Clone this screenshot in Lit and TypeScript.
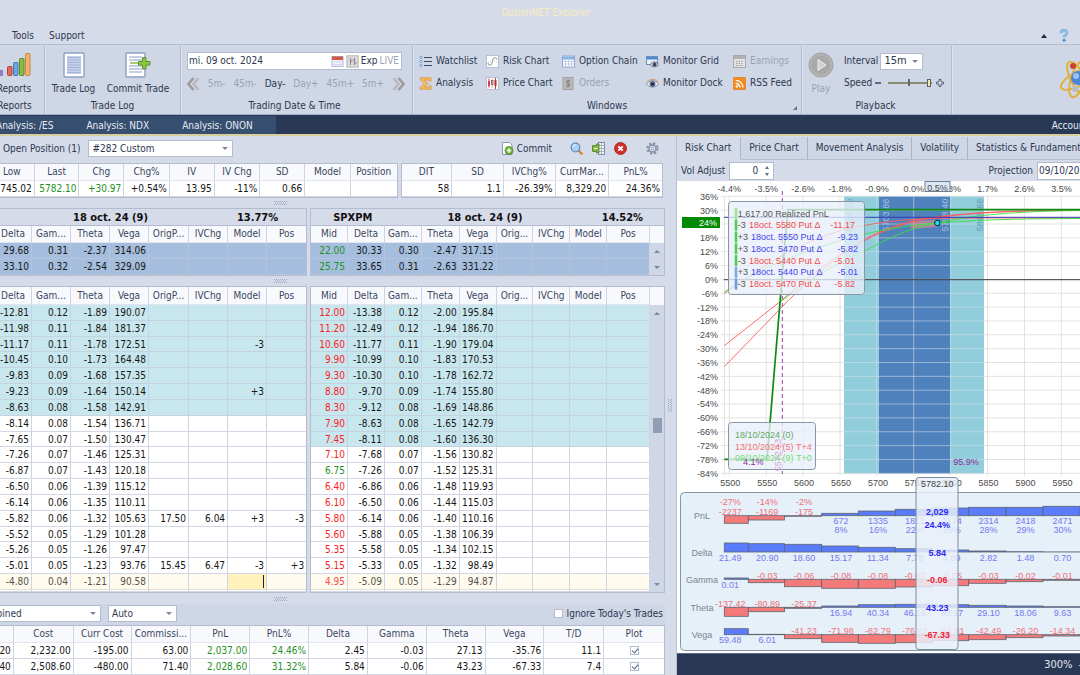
import { LitElement, html, svg, css } from "lit";
import { customElement } from "lit/decorators.js";
import { classMap } from "lit/directives/class-map.js";

const base = css`
  * { box-sizing: border-box; }
  :host { display: block; min-width: 0; font: 10px/14px "DejaVu Sans Condensed", "Noto Sans", sans-serif; color: #2c3850; }
  button, input, select { font: inherit; color: inherit; margin: 0; border-radius: 0; }
  button { background: none; border: 0; padding: 0; white-space: nowrap; }
  input, select { appearance: none; border: 1px solid #b2bccf; background: #fff; outline: none; min-width: 0; }
  svg { display: block; flex: none; }
  .combo { position: relative; display: block; }
  .combo select { display: block; width: 100%; height: 17px; padding: 0 14px 0 3px; }
  .combo::after { content: ""; position: absolute; right: 5px; top: 7px; border: 3px solid transparent; border-top-color: #7c88a3; border-bottom: 0; }
`;

const combo = (label: string, value: string) => html`
  <span class="combo"><select aria-label=${label}><option>${value}</option></select></span>`;

/* ---------- icons ---------- */
const icons: Record<string, unknown> = {
  watch: svg`<g stroke="#3f4a60"><path d="M5 2.5h8M5 6.5h8M5 10.5h8"/></g><g fill="#dcecff" stroke="#5f8fcb" stroke-width=".8"><circle cx="2" cy="2.5" r="1.2"/><circle cx="2" cy="6.5" r="1.2"/><circle cx="2" cy="10.5" r="1.2"/></g>`,
  sigma: svg`<path d="M1 .8h11v3.400h-1.500L9.500 3H5.500L9 6.500 5.500 10h4.300l1-1.300h1.200v3.500H1v-1.500L5.300 6.500 1 2.300z" fill="#f6bd62" stroke="#d08f2e" stroke-width=".7"/>`,
  risk: svg`<rect x=".5" y=".5" width="12" height="12" fill="#fff" stroke="#b6c0d4"/><path d="M2 8c0 3 3.500 3 4 0l.8-3C7.300 2 10.500 2 11 4.500" fill="none" stroke="#6d9460" /><path d="M2 7h9" stroke="#c9d0dc" stroke-dasharray="1 1"/>`,
  price: svg`<rect x=".5" y=".5" width="12" height="12" fill="#fff" stroke="#b6c0d4"/><path d="M3 1.500v9M9.500 1v11" stroke="#c33"/><rect x="2" y="4" width="2" height="5" fill="#e04040"/><rect x="8.500" y="3" width="2" height="6" fill="#c62828"/><rect x="5.500" y="3.500" width="1.500" height="4" fill="#fff" stroke="#555" stroke-width=".8"/><path d="M6.200 2v9" stroke="#888" stroke-width=".6"/>`,
  chain: svg`<rect x=".5" y="1" width="12" height="11" fill="#fff" stroke="#8fa9d0"/><rect x="1" y="1.500" width="11" height="3" fill="#7db0e4"/><path d="M1 6.500h11M1 9h11M3.500 2v9.500M6.500 2v9.500M9.500 2v9.500" stroke="#b3c6e2" stroke-width=".8"/>`,
  orders: svg`<rect x="1" y=".5" width="10" height="12" fill="#b9b9b9" stroke="#a2a2a2"/><path d="M8.200 4.200C7.500 3.300 4.300 3.400 4.300 5c0 1.700 3.700 1.100 3.700 2.900 0 1.700-3.300 1.700-4 .5M6.100 2.500v8" fill="none" stroke="#7e7e7e"/>`,
  mgrid: svg`<rect x=".5" y="1.500" width="11" height="8" fill="#e9f1fb" stroke="#6f8fbf"/><rect x="1" y="2" width="10" height="2.500" fill="#4f8bd0"/><path d="M4 9.500c2.500-3.500 6.500-3.500 9 0-2.500 3-6.500 3-9 0z" fill="#dfe6f2" stroke="#4d566b" stroke-width=".8"/><circle cx="8.600" cy="9.500" r="2" fill="#39455f"/>`,
  mdock: svg`<path d="M.5 7c3-4.500 9-4.500 12 0-3 4-9 4-12 0z" fill="#f4f4f4" stroke="#7d8598" stroke-width=".9"/><path d="M1 5c3-3.500 8-3.500 11 0" fill="none" stroke="#d39a55"/><circle cx="6.500" cy="7" r="3" fill="#5a7195"/><circle cx="6.500" cy="7" r="1.500" fill="#20242e"/>`,
  earn: svg`<rect x=".5" y=".5" width="12" height="12" fill="#e3e3e3" stroke="#a9a9a9"/><rect x="1" y="1" width="11" height="3" fill="#b0b0b0"/><path d="M3 6.500h7M3 8.500h7M3 10.500h7" stroke="#a2a2a2" stroke-dasharray="1.500 1"/>`,
  rss: svg`<rect x=".3" y=".3" width="12.400" height="12.400" rx="1.500" fill="#f28a1c" stroke="#d9730d" stroke-width=".6"/><circle cx="3.800" cy="9.400" r="1.200" fill="#fff"/><path d="M2.700 6.300a4.200 4.200 0 0 1 4.200 4.200M2.700 3.300a7.200 7.200 0 0 1 7.200 7.200" fill="none" stroke="#fff" stroke-width="1.300"/>`,
  calendar: svg`<rect x="1" y="1.500" width="11" height="10" fill="#eef2fa" stroke="#9aa9c7" stroke-width=".8"/><rect x="1" y="1.500" width="11" height="3.500" fill="#d5584c"/><path d="M3 7h8M3 9.500h8" stroke="#b7c4dc" stroke-dasharray="1.500 1"/>`,
  candles: svg`<rect x=".8" y=".8" width="11.400" height="11.400" fill="#d9d9d9" stroke="#adadad" stroke-width=".8"/><path d="M4.500 3v7M4.500 6h2M8.500 3v7M8.500 8h2M6.700 5h1.800" stroke="#777" stroke-width=".8"/>`,
  commit: svg`<path d="M1.500.5h7l2.500 2.500v9.500h-9.500z" fill="#fff" stroke="#8b97b3"/><circle cx="8" cy="8.500" r="4" fill="#6fb23a" stroke="#4d8a25" stroke-width=".8"/><path d="M8 6.300v4.400M5.800 8.500h4.400" stroke="#fff" stroke-width="1.400"/>`,
  lens: svg`<path d="M8.500 8.500l4 4" stroke="#c98b3c" stroke-width="2.400"/><circle cx="5.500" cy="5.500" r="4.300" fill="#a9cff5" stroke="#5f8cc6" stroke-width="1.300"/><path d="M3 5a2.500 2.500 0 0 1 2.500-2.300" stroke="#fff" fill="none"/>`,
  columns: svg`<rect x="6.500" y=".5" width="6" height="12" fill="#f4f7fc" stroke="#7f8ca8"/><path d="M7 3.500h5M7 6.500h5M7 9.500h5M9.500 1v11" stroke="#a5b0c6"/><path d="M.5 3.500h4V2h2.500v9H4.500V9.500h-4z" fill="#7db63f" stroke="#527f24" stroke-width=".8"/><path d="M2 6.500h3.500" stroke="#fff"/>`,
  stop: svg`<circle cx="6.500" cy="6.500" r="6" fill="#cf2f27" stroke="#a51f19" stroke-width=".8"/><path d="M4.300 4.300l4.400 4.400M8.700 4.300L4.300 8.700" stroke="#fff" stroke-width="1.900"/>`,
  gear: svg`<circle cx="6.500" cy="6.500" r="5.200" fill="none" stroke="#8792aa" stroke-width="2" stroke-dasharray="2.300 1.780"/><circle cx="6.500" cy="6.500" r="3.600" fill="#dfe5f0" stroke="#8792aa" stroke-width="1.600"/><circle cx="6.500" cy="6.500" r="1.300" fill="#f7f9fd" stroke="#77839c" stroke-width=".8"/>`,
};
const icon = (name: string) => html`<svg width="13" height="13" viewBox="0 0 13 13" aria-hidden="true">${icons[name]}</svg>`;

const chevrons = (flip: boolean) => html`
  <svg width="14" height="14" viewBox="0 0 14 14" aria-hidden="true">
    <g fill="none" stroke="#9b9b9b" stroke-width="2.600" transform=${flip ? "matrix(-1 0 0 1 14 0)" : ""}>
      <path d="M7.500 1L2.500 7l5 6"/><path d="M12.500 1L7.500 7l5 6" stroke="#b9b9bd"/>
    </g>
  </svg>`;

/* ---------- ribbon ---------- */
@customElement("app-ribbon")
class AppRibbon extends LitElement {
  static styles = [base, css`
    .title { height: 25px; line-height: 25px; padding-left: 11px; text-align: center; color: #f6ecbd; }
    .menu { display: flex; align-items: center; height: 20px; padding: 2px 11px 0 12px; gap: 15px; border-bottom: 1px solid #b3bed2; }
    .spacer { flex: 1; }
    .up { border: 3px solid transparent; border-bottom: 4px solid #1e2a44; border-top: 0; }
    .menu svg { margin: -1px 0 0 -3px; }
    .bar { display: flex; height: 70px; padding-top: 1px; background: #cfd6e5; border-bottom: 1px solid #a3afc4; }
    .group { display: flex; flex-direction: column; flex: none; position: relative; padding: 6px 6px 0; border-right: 1px solid #b3bed2; box-shadow: 1px 0 #dfe4ef; }
    .group h2 { font: inherit; text-align: center; margin: auto 0 1px; }
    .body { display: flex; height: 46px; }
    .reports { width: 60px; margin-left: -15px; }
    .reports .big { width: 46px; }
    .log { width: 136px; padding: 6px 5px 0; }
    .date { width: 232px; padding: 6px 10px 0 6px; }
    .windows { width: 389px; }
    .play { width: 150px; padding-left: 4px; }
    .big { display: flex; flex-direction: column; align-items: center; justify-content: space-between; height: 44px; }
    .log .big { width: 49px; }
    .log .big + .big { width: 77px; margin-left: 4px; }
    .date .body { flex-direction: column; }
    .field { display: flex; align-items: center; height: 18px; gap: 2px; background: #fff; border: 1px solid #b2bccf; padding-right: 2px; }
    .field input { flex: 1; width: 0; border: 0; padding: 0 1px; background: none; }
    .muted, button:disabled { color: #9aa3b5; }
    .steps { display: flex; align-items: center; justify-content: space-between; margin: 6px -4px 0 -1px; height: 15px; }
    .links { display: grid; grid-template-columns: 67px 76px 84px 87px 66px; grid-template-rows: 18px 18px; row-gap: 4px; }
    .links button { display: flex; align-items: center; gap: 4px; }
    .corner { position: absolute; right: 4px; bottom: 4px; border: 2px solid #5d6f92; border-top-color: transparent; border-left-color: transparent; }
    .play .big { width: 31px; color: #9aa3b5; }
    .controls { margin-left: 8px; }
    .line { display: flex; align-items: center; height: 18px; margin-bottom: 4px; }
    .line .combo { width: 43px; margin-left: 2px; }
    .line .combo select { font-size: 11px; }
    .line button { width: 9px; line-height: 10px; text-align: center; }
    .line i { display: block; width: 6px; height: 2px; background: #5f6c86; }
    .speed { width: 44px; height: 10px; margin: 0 4px; border: 0; background: linear-gradient(#667, #667) 20px 1px / 2px 7px no-repeat, linear-gradient(#8b8b70, #8b8b70) 0 4px / 100% 2px no-repeat; }
    .speed::-webkit-slider-thumb { appearance: none; width: 4px; height: 8px; background: #f6e9a8; border: 1px solid #55607a; }
    .logo { margin: 12px -18px 0 auto; }
    .docs { display: flex; height: 20px; margin-top: 1px; background: #293955; border-bottom: 2px solid #d8cf9c; color: #e6ebf4; box-shadow: 0 -1px #293955; }
    .docs nav { display: flex; background: #364e6f; padding-right: 23px; margin-left: -4px; }
    .docs a { color: inherit; text-decoration: none; line-height: 20px; }
    .docs a + a { margin-left: 33px; }
    .docs .account { margin: 0 -8px 0 auto; line-height: 20px; }
    .clip { overflow: hidden; }
  `];
  render() {
    const link = (i: string, t: string, off = false) => html`<button ?disabled=${off}>${icon(i)}${t}</button>`;
    return html`
      <div class="title">OptionNET Explorer</div>
      <div class="menu">
        <button>Tools</button><button>Support</button><span class="spacer"></span><span class="up"></span>
        <svg width="10" height="13" viewBox="0 0 10 13"><path d="M2 4.200C2 .500 8 .500 8 4c0 2-2.900 2-2.900 4.500" fill="none" stroke="#5a9bd0" stroke-width="2.600"/><path d="M2 4.200C2 .500 8 .500 8 4c0 2-2.900 2-2.900 4.500" fill="none" stroke="#a9d4f2" stroke-width="1.200"/><circle cx="5.100" cy="11.300" r="1.500" fill="#4a8fc9"/></svg>
      </div>
      <div class="bar clip">
        <section class="group reports">
          <div class="body"><button class="big">
            <svg width="34" height="26" viewBox="0 0 34 26"><rect x="2" y="18" width="4" height="6" fill="#8a7fc0"/><rect x="10.500" y="14.500" width="4.500" height="9" rx="1" fill="#df6a5d" stroke="#b04238"/><rect x="16.500" y="10.500" width="4.500" height="13" rx="1" fill="#6fa6de" stroke="#3f77b5"/><rect x="22.500" y="6.500" width="4.500" height="17" rx="1" fill="#87bb45" stroke="#5c8b26"/><rect x="28.500" y="1.500" width="4.500" height="22" rx="1" fill="#f1b271" stroke="#c98440"/></svg>
            Reports</button></div>
          <h2>Reports</h2>
        </section>
        <section class="group log">
          <div class="body">
            <button class="big"><svg width="22" height="26" viewBox="0 0 22 26"><rect x="1" y="1" width="20" height="24" rx="1" fill="#fff" stroke="#8fa0c4" stroke-width="1.400"/><rect x="4" y="4" width="14" height="18" fill="#c5d2ea"/><path d="M4 5.500h14M4 8h14M4 10.500h14M4 13h14M4 15.500h14M4 18h14M4 20.500h14" stroke="#9fb0d4" stroke-width=".9"/></svg>Trade Log</button>
            <button class="big"><svg width="26" height="26" viewBox="0 0 26 26"><rect x="1" y="1" width="19" height="24" rx="1" fill="#fff" stroke="#8fa0c4" stroke-width="1.400"/><path d="M4 5h13M4 8h13M4 14h13M4 17h13M4 20h13" stroke="#b3c0dc" stroke-width="1.400"/><path d="M5 11h10" stroke="#86b23c" stroke-width="1.400"/><path d="M17.500 5.500h3.500v4h4v3.500h-4v4h-3.500v-4h-4v-3.500h4z" fill="#8ec63f" stroke="#5f922a"/></svg>Commit Trade</button>
          </div>
          <h2>Trade Log</h2>
        </section>
        <section class="group date">
          <div class="body">
            <div class="field"><input aria-label="Trading date" value="mi. 09 oct. 2024">${icon("calendar")}${icon("candles")}<button>Exp</button><button class="muted">LIVE</button></div>
            <div class="steps">
              <button aria-label="Back">${chevrons(false)}</button>
              <button disabled>5m-</button><button disabled>45m-</button><button>Day-</button><button disabled>Day+</button><button disabled>45m+</button><button disabled>5m+</button>
              <button aria-label="Forward">${chevrons(true)}</button>
            </div>
          </div>
          <h2>Trading Date &amp; Time</h2>
        </section>
        <section class="group windows">
          <div class="body links">
            ${link("watch", "Watchlist")}${link("risk", "Risk Chart")}${link("chain", "Option Chain")}${link("mgrid", "Monitor Grid")}${link("earn", "Earnings", true)}
            ${link("sigma", "Analysis")}${link("price", "Price Chart")}${link("orders", "Orders", true)}${link("mdock", "Monitor Dock")}${link("rss", "RSS Feed")}
          </div>
          <h2>Windows</h2><span class="corner"></span>
        </section>
        <section class="group play">
          <div class="body">
            <button class="big"><svg width="26" height="26" viewBox="0 0 26 26"><circle cx="13" cy="13" r="12" fill="#b4b4b4" stroke="#a0a0a0"/><circle cx="13" cy="13" r="9.500" fill="#a8a8a8"/><path d="M10 7.500l8 5.500-8 5.500z" fill="#d2d2d2" stroke="#eee"/></svg>Play</button>
            <div class="controls">
              <div class="line">Interval ${combo("Interval", "15m")}</div>
              <div class="line"><label for="speed">Speed</label>&nbsp;<button aria-label="Slower"><i></i></button><input id="speed" class="speed" type="range" value="97"><button aria-label="Faster"><svg width="8" height="8" viewBox="0 0 8 8"><path d="M3 .500h2V3h2.500v2H5v2.500H3V5H.500V3H3z" fill="#dde3ee" stroke="#55607a"/></svg></button></div>
            </div>
          </div>
          <h2>Playback</h2>
        </section>
        <svg class="logo" width="40" height="42" viewBox="0 0 40 42">
          <g fill="none" stroke="#e0b23c" stroke-width="2"><ellipse cx="20" cy="21" rx="19" ry="7" transform="rotate(-28 20 21)"/><ellipse cx="20" cy="21" rx="19" ry="7" transform="rotate(62 20 21)"/><ellipse cx="20" cy="21" rx="19" ry="7" transform="rotate(108 20 21)"/></g>
          <circle cx="20" cy="20" r="7" fill="#4d86d6"/><circle cx="18" cy="18" r="3" fill="#9cc3f2"/><circle cx="15" cy="8" r="3" fill="#c8432c"/><circle cx="17" cy="31" r="3" fill="#b9bcc4"/>
        </svg>
      </div>
      <div class="docs clip">
        <nav><a href="#es">Analysis: /ES</a><a href="#ndx">Analysis: NDX</a><a href="#onon">Analysis: ONON</a></nav>
        <span class="account">Account</span>
      </div>`;
  }
}

/* ---------- data ---------- */
const putsA = `-12.81 0.12 -1.89 190.07|-11.98 0.11 -1.84 181.37|-11.17 0.11 -1.78 172.51 . . -3|-10.45 0.10 -1.73 164.48|-9.83 0.09 -1.68 157.35|-9.23 0.09 -1.64 150.14 . . +3|-8.63 0.08 -1.58 142.91|-8.14 0.08 -1.54 136.71|-7.65 0.07 -1.50 130.47|-7.26 0.07 -1.46 125.31|-6.87 0.07 -1.43 120.18|-6.50 0.06 -1.39 115.12|-6.14 0.06 -1.35 110.11|-5.82 0.06 -1.32 105.63 17.50 6.04 +3 -3|-5.52 0.05 -1.29 101.28|-5.26 0.05 -1.26 97.47|-5.01 0.05 -1.23 93.76 15.45 6.47 -3 +3|-4.80 0.04 -1.21 90.58`;
const putsB = `12.00 -13.38 0.12 -2.00 195.84|11.20 -12.49 0.12 -1.94 186.70|10.60 -11.77 0.11 -1.90 179.04|9.90 -10.99 0.10 -1.83 170.53|9.30 -10.30 0.10 -1.78 162.72|8.80 -9.70 0.09 -1.74 155.80|8.30 -9.12 0.08 -1.69 148.86|7.90 -8.63 0.08 -1.65 142.79|7.45 -8.11 0.08 -1.60 136.30|7.10 -7.68 0.07 -1.56 130.82|6.75 -7.26 0.07 -1.52 125.31|6.40 -6.86 0.06 -1.48 119.93|6.10 -6.50 0.06 -1.44 115.03|5.80 -6.14 0.06 -1.40 110.16|5.60 -5.88 0.05 -1.38 106.39|5.35 -5.58 0.05 -1.34 102.15|5.15 -5.33 0.05 -1.32 98.49|4.95 -5.09 0.05 -1.29 94.87`;
const parse = (t: string, n: number) => t.split("|").map((r) => {
  const c = r.split(" ").map((v) => (v === "." ? "" : v));
  while (c.length < n) c.push("");
  return c;
});
const headA = ["Delta", "Gam...", "Theta", "Vega", "OrigP...", "IVChg", "Model", "Pos"];
const headB = ["Mid", "Delta", "Gam...", "Theta", "Vega", "Orig...", "IVChg", "Model", "Pos"];
const callsA = parse("29.68 0.31 -2.37 314.06|33.10 0.32 -2.54 329.09", 8);
const callsB = parse("22.00 30.33 0.30 -2.47 317.15|25.75 33.65 0.31 -2.63 331.22", 9);

/* ---------- position panel ---------- */
@customElement("position-panel")
class PositionPanel extends LitElement {
  static styles = [base, css`
    :host { overflow: hidden; background: #d6dbe9; }
    .tools { display: flex; align-items: center; height: 27px; padding: 0 17px 2px 3px; }
    .tools .combo { width: 145px; margin-left: 8px; }
    .tools button { display: flex; align-items: center; gap: 3px; }
    .tools .commit { margin-left: auto; }
    .tools .gap { margin-left: 18px; }
    .tools .near { margin-left: 9px; }
    .tools .far { margin-left: 19px; }
    .pair { display: flex; gap: 3px; margin: 0 11px 0 -6px; }
    .summary { margin: 0 13px 0 -11px; }
    .box { display: flex; border: 1px solid #b4bdd0; background: #fff; min-width: 0; }
    .w409 { flex: 409 1 0; } .w262 { flex: 262 1 0; } .w313 { flex: 313 1 0; } .w355 { flex: 355 1 0; }
    table { display: block; flex: 1; min-width: 0; }
    thead { display: block; }
    tbody { display: grid; grid-auto-rows: 16px; }
    tr { display: grid; }
    th, td { padding: 0 2px 0 0; border-right: 1px solid #cfd4e2; overflow: hidden; white-space: nowrap; min-width: 0; line-height: 15px; }
    th { font-weight: normal; color: #3a465e; text-align: center; background: #f8f9fd; line-height: 16px; border-bottom: 1px solid #e2e5f0; padding: 0; }
    thead tr { height: 17px; }
    td { text-align: right; color: #161616; border-bottom: 1px solid #d3d7e5; }
    th:last-child, td:last-child { border-right: 0; }
    .c-s1 tr { grid-template-columns: 45fr 45fr 45fr 46fr 45fr 46fr 45fr 46fr 46fr; }
    .c-s2 tr { grid-template-columns: 51fr 52fr 52fr 54fr 53fr; }
    .c-a tr { grid-template-columns: 37fr 39fr 39fr 39fr 40fr 39fr 39fr 39fr; }
    .c-b tr { grid-template-columns: 37fr 37fr 37fr 38fr 37fr 37fr 37fr 37fr 42fr; }
    .c-b { border-right: 1px solid #cfd4e2; }
    .c-t tr { grid-template-columns: 59fr 60fr 58fr 60fr 59fr 59fr 59fr 59fr 59fr 59fr 60fr 60fr; }
    .green { color: #1f8f1f; }
    .red { color: #fb1d24; }
    .split { display: flex; justify-content: center; align-items: center; height: 11px; margin: 0 11px 0 -105px; }
    .split.short { height: 10px; }
    .stack { flex-direction: column; background: #d6dbe9; }
    .head { display: flex; height: 17px; font-weight: bold; font-size: 11px; line-height: 18px; color: #111; border-bottom: 1px solid #b4bdd0; }
    .head .dayA { flex: 1; padding-left: 78px; }
    .head .ivA { padding-right: 28px; }
    .head .sym { padding-left: 22px; width: 60px; }
    .head .dayB { flex: 1; text-align: center; padding-right: 3px; }
    .head .ivB { padding-right: 21px; }
    .rows { display: flex; }
    .calls td { background: #a6bedd; border-color: #b6c3dc; }
    .puts thead tr { height: 18px; }
    .puts th { line-height: 17px; }
    .puts tbody { height: 287px; grid-template-rows: repeat(18, minmax(0, 1fr)) 2px; }
    .near td { background: #c8e6ed; border-color: #c5d3e0; }
    .current td { background: #fffbee; color: #55534a; border-bottom-color: #e3e0d0; }
    .current td.red { color: #fb4a4a; }
    .current td.edit { background: #fff2bb; padding-right: 2px; }
    .edit input { display: block; width: 100%; height: 13px; margin-top: 1px; padding: 0; background: none; border: 0; border-right: 1px solid #222; }
    .bar { display: flex; flex-direction: column; align-items: center; width: 14px; background: #cfd6e5; }
    .bar .cap { align-self: stretch; height: 17px; background: #f8f9fd; }
    .puts .cap { height: 18px; }
    .bar button { height: 16px; display: flex; align-items: center; }
    .tri { border: 3px solid transparent; }
    .tri.u { border-top: 0; border-bottom-color: #7c88a3; }
    .tri.d { border-bottom: 0; border-top-color: #7c88a3; }
    .space { flex: 1; }
    .space.lo { flex: 143; } .space.hi { flex: 97; }
    .thumb { width: 9px; height: 15px; background: #919cb5; }
    .filter { display: flex; align-items: center; gap: 7px; height: 21px; margin: 0 11px 0 -28px; padding: 0 2px 2px 0; background: #cfd6e5; }
    .filter .combo { width: 129px; }
    .filter .auto .combo { width: 69px; }
    .filter label { margin-left: auto; display: flex; align-items: center; gap: 4px; }
    input[type="checkbox"] { position: relative; width: 9px; height: 9px; }
    input[type="checkbox"]:checked::after { content: ""; position: absolute; left: 2px; top: 0; width: 3px; height: 5px; border: solid #55617d; border-width: 0 1px 1px 0; transform: rotate(40deg); }
    .totals { margin: 0 11px 0 -46px; border-bottom: 0; }
    .totals td.plot { display: flex; justify-content: center; align-items: center; padding: 0; }
  `];

  private split(short = false) {
    return html`<div class=${classMap({ split: true, short })}><svg width="13" height="4" viewBox="0 0 13 4"><path d="M0 .500h13M1 2h12M0 3.500h13" stroke="#a0aac0" stroke-width="1" stroke-dasharray="1 1"/></svg></div>`;
  }
  private table(cls: string, head: string[], rows: string[][], opt: { near?: number; puts?: boolean; mid?: boolean; green?: number[] } = {}) {
    return html`<table class=${cls}>
      <thead><tr>${head.map((h) => html`<th>${h}</th>`)}</tr></thead>
      <tbody>
        ${rows.map((r, i) => html`<tr class=${classMap({ near: i < (opt.near ?? 0), current: !!opt.puts && i === 17 })}>
          ${r.map((v, j) => {
            const green = (opt.green ?? []).includes(j) || (!!opt.mid && j === 0 && (!opt.puts || v === "6.75"));
            const edit = !!opt.puts && !opt.mid && i === 17 && j === 6;
            return html`<td class=${classMap({ green, red: !!opt.mid && j === 0 && !green, edit })}>${edit ? html`<input aria-label="Model quantity">` : v}</td>`;
          })}</tr>`)}
        ${opt.puts ? html`<tr>${head.map(() => html`<td></td>`)}</tr>` : ""}
      </tbody></table>`;
  }
  private scroll(thumb: boolean) {
    return html`<div class="bar"><span class="cap"></span>
      <button aria-label="Scroll up"><span class="tri u"></span></button>
      ${thumb ? html`<span class="space hi"></span><span class="thumb"></span><span class="space lo"></span>` : html`<span class="space"></span>`}
      <button aria-label="Scroll down"><span class="tri d"></span></button></div>`;
  }
  render() {
    const totals = [
      ["20", "2,232.00", "-195.00", "63.00", "2,037.00", "24.46%", "2.45", "-0.03", "27.13", "-35.76", "11.1"],
      ["40", "2,508.60", "-480.00", "71.40", "2,028.60", "31.32%", "5.84", "-0.06", "43.23", "-67.33", "7.4"],
    ];
    return html`
      <div class="tools">Open Position (1)${combo("Position", "#282 Custom")}
        <button class="commit">${icon("commit")}Commit</button>
        <button class="gap" aria-label="Find">${icon("lens")}</button>
        <button class="near" aria-label="Columns">${icon("columns")}</button>
        <button class="near" aria-label="Close">${icon("stop")}</button>
        <button class="far" aria-label="Settings">${icon("gear")}</button>
      </div>
      <div class="pair summary">
        <div class="box w409">${this.table("c-s1", ["Low", "Last", "Chg", "Chg%", "IV", "IV Chg", "SD", "Model", "Position"], [["5745.02", "5782.10", "+30.97", "+0.54%", "13.95", "-11%", "0.66", "", ""]], { green: [1, 2] })}</div>
        <div class="box w262">${this.table("c-s2", ["DIT", "SD", "IVChg%", "CurrMar...", "PnL%"], [["58", "1.1", "-26.39%", "8,329.20", "24.36%"]])}</div>
      </div>
      ${this.split(true)}
      <div class="pair calls">
        <div class="box stack w313"><div class="head"><span class="dayA">18 oct. 24 (9)</span><span class="ivA">13.77%</span></div><div class="rows">${this.table("c-a", headA, callsA)}</div></div>
        <div class="box stack w355"><div class="head"><span class="sym">SPXPM</span><span class="dayB">18 oct. 24 (9)</span><span class="ivB">14.52%</span></div><div class="rows">${this.table("c-b", headB, callsB, { mid: true })}${this.scroll(false)}</div></div>
      </div>
      ${this.split(true)}
      <div class="pair puts">
        <div class="box w313">${this.table("c-a", headA, parse(putsA, 8), { near: 7, puts: true })}</div>
        <div class="box w355">${this.table("c-b", headB, parse(putsB, 9), { near: 9, puts: true, mid: true })}${this.scroll(true)}</div>
      </div>
      ${this.split()}
      <div class="filter">${combo("Grouping", "Combined")}<span class="auto">${combo("Mode", "Auto")}</span><label><input type="checkbox">Ignore Today's Trades</label></div>
      <div class="box totals"><table class="c-t">
        <thead><tr>${["", "Cost", "Curr Cost", "Commissi...", "PnL", "PnL%", "Delta", "Gamma", "Theta", "Vega", "T/D", "Plot"].map((h) => html`<th>${h}</th>`)}</tr></thead>
        <tbody>${totals.map((r) => html`<tr>${r.map((v, j) => html`<td class=${classMap({ green: j === 4 || j === 5 })}>${v}</td>`)}<td class="plot"><input type="checkbox" checked aria-label="Plot"></td></tr>`)}</tbody>
      </table></div>`;
  }
}

/* ---------- chart panel ---------- */
const px = (v: number) => 729.3 + (v - 5500) * 0.738;
const py = (p: number) => 196.3 + ((36 - p) / 6) * 13.85;
const strikes = [5500, 5550, 5600, 5650, 5700, 5750, 5800, 5850, 5900, 5950];
const edges = [724.3, 748.3, 784.5, 821.7, 858.3, 895.3, 932.3, 968.7, 1006, 1043, 1080];
const greeks = [
  { name: "PnL", base: 515.7, ends: [523.3, 520, 516.3, 513.3, 511, 509.3, 508, 507.3, 507.3, 506.3], vals: ["-2237", "-1169", "-175", "672", "1335", "1811", "2124", "2314", "2418", "2471"], neg: 512.3, pos: 521.3, pct: ["-27%", "-14%", "-2%", "8%", "16%", "22%", "26%", "28%", "29%", "30%"] },
  { name: "Delta", base: 552, ends: [543, 543.7, 544.3, 546, 547.3, 548.7, 550, 551, 551.7, 551.9], vals: ["21.49", "20.90", "18.60", "15.17", "11.34", "7.78", "4.89", "2.82", "1.48", "0.70"], neg: 548, pos: 557.7 },
  { name: "Gamma", base: 579.3, ends: [578, 582.7, 586.7, 588.3, 588.3, 587, 585.7, 583.3, 581.7, 580.3], vals: ["0.01", "-0.03", "-0.06", "-0.08", "-0.08", "-0.07", "-0.05", "-0.03", "-0.02", "-0.01"], neg: 576, pos: 585.3 },
  { name: "Theta", base: 607.3, ends: [616.3, 611.7, 608.3, 606, 604.7, 604.3, 604.7, 605.3, 606, 606.7], vals: ["-137.42", "-80.89", "-25.37", "16.94", "40.34", "46.16", "40.17", "29.10", "18.06", "9.63"], neg: 603.7, pos: 613 },
  { name: "Vega", base: 634.7, ends: [628.7, 634.3, 638.7, 642.3, 643.3, 642.7, 640.7, 639.7, 637.7, 636], vals: ["59.48", "6.01", "-41.23", "-71.98", "-82.79", "-76.82", "-61.81", "-42.49", "-26.20", "-14.34"], neg: 631.3, pos: 640 },
];
const legs = [
  ["-3", "5580", "-11.17", "#4fcf4f"], ["+3", "5550", "-9.23", "#4fcf4f"], ["+3", "5470", "-5.82", "#4fcf4f"],
  ["-3", "5440", "-5.01", "#4fcf4f"], ["+3", "5440", "-5.01", "#7aa7ee"], ["-3", "5470", "-5.82", "#6d9be6"],
];
const label = (x: number, y: number, t: string, fill = "#4a4a4a", anchor = "middle", bold = false) =>
  svg`<text x=${x} y=${y + 3} fill=${fill} text-anchor=${anchor} font-weight=${bold ? "bold" : "normal"}>${t}</text>`;
const upright = (x: number, y: number, t: string, fill: string) =>
  svg`<text transform="translate(${x + 3} ${y}) rotate(-90)" fill=${fill} text-anchor="middle">${t}</text>`;

@customElement("chart-panel")
class ChartPanel extends LitElement {
  static styles = [base, css`
    :host { overflow: hidden; background: #d6dbe9; border-left: 1px solid #b9c3d6; }
    .tabs { display: flex; margin-top: 1px; height: 23px; background: #cfd6e5; white-space: nowrap; }
    .tabs button { padding: 0 8px; border-right: 1px solid #a9b4c8; border-bottom: 1px solid #b5bfd2; background: #cfd6e5; flex: none; }
    .tabs .on { background: #d6dbe9; border-bottom-color: #d6dbe9; padding-right: 9px; }
    .form { display: flex; align-items: center; height: 21px; padding-left: 4px; }
    .spin { display: flex; align-items: center; width: 45px; height: 18px; margin-left: 4px; background: #fff; border: 1px solid #b2bccf; }
    .spin input { width: 28px; border: 0; text-align: right; padding: 0; background: none; }
    .arrows { margin-left: 7px; display: grid; gap: 4px; }
    .tri { border: 2px solid transparent; border-top: 0; border-bottom: 3px solid #5f6c86; }
    .tri.d { border-bottom: 0; border-top: 3px solid #5f6c86; }
    .proj { margin: 0 -30px 0 auto; display: flex; align-items: center; gap: 4px; }
    .proj input { width: 73px; height: 18px; padding: 0 1px; }
    .chart { width: 100%; height: auto; background: #fff; font: 9px "Liberation Sans", Arial, sans-serif; }
    .foot { height: 22px; background: #293955; color: #e3e8f1; display: flex; justify-content: flex-end; align-items: center; gap: 6px; margin-right: -2px; font-size: 11px; border-top: 1px solid #5a6784; }
  `];
  render() {
    const pcts = ["-4.4%", "-3.5%", "-2.6%", "-1.8%", "-0.9%", "0.0%", "0.8%", "1.7%", "2.6%", "3.5%"];
    const levels = Array.from({ length: 21 }, (_, i) => 36 - 6 * i);
    return html`
      <div class="tabs"><button class="on">Risk Chart</button><button>Price Chart</button><button>Movement Analysis</button><button>Volatility</button><button>Statistics &amp; Fundamentals</button></div>
      <div class="form"><label for="vol">Vol Adjust</label>
        <span class="spin"><input id="vol" value="0"><span class="arrows"><span class="tri"></span><span class="tri d"></span></span></span>
        <label class="proj">Projection <input value="09/10/2024"></label></div>
      <svg class="chart" viewBox="677 181 403 472">
        ${strikes.map((s, i) => svg`${label(px(s), 188.7, pcts[i])}${label(px(s) + 1, 483.3, String(s))}`)}
        ${levels.map((p) => (p === 24 ? "" : label(718, py(p) + 0.4, p + "%", "#4a4a4a", "end")))}
        <rect x="682" y="217" width="38" height="11" fill="#008a00"/>${label(717, 222.5, "24%", "#fff", "end")}
        <g stroke="#e2e2e2">
          ${strikes.map((s) => svg`<path d="M${px(s)} 196V476"/>`)}<path d="M724.500 196V476"/>
          ${levels.map((p) => svg`<path d="M721 ${py(p)}H1080"/>`)}
        </g>
        <rect x="844" y="196.500" width="140" height="277" fill="#92cddc"/><rect x="879" y="196.500" width="71" height="277" fill="#4f81bd"/>
        <g stroke="#d9e0e6" stroke-opacity=".55">
          ${levels.map((p) => svg`<path d="M844 ${py(p)}H984"/>`)}<path d="M876.700 196V474M913.700 196V474M950.700 196V474"/>
        </g>
        ${upright(850, 215, "5656.60", "#6fa9bd")}${upright(885.7, 215, "5703.86", "#a3c0e0")}${upright(945.3, 215, "5798.40", "#a3c0e0")}${upright(979.700, 215, "5845.66", "#5b9bb2")}
        <path d="M911 221L936 220 937 227 911 229z" fill="#f08a8a" fill-opacity=".6"/>
        <path d="M724 279.700H1080" stroke="#3a3a3a"/>
        <path d="M782.300 191V474" stroke="#a03aa8" stroke-dasharray="4 3"/>
        <g fill="none" stroke="#ff5a5a" stroke-width=".9">
          <path d="M724.300 293.500C756 271 790 246 842 230C880 221 912 219 938 218.300C990 217.800 1030 218 1080 218.200"/>
          <path d="M724.300 345.700L780 301.700C800 284 835 255 862 242C890 226 925 217 953 215C1000 210.500 1040 210.500 1080 210.300"/>
          <path d="M724.300 366.700L789 299.700C815 276 838 256 863 240C885 229 908 219 938 217.500C975 212 1030 210.500 1080 210.500"/>
        </g>
        <g fill="none" stroke="#3ee03e" stroke-width=".9">
          <path d="M779 303C800 286 835 263 864 251.500C890 237 915 226 938 223C975 214 1030 211 1080 210.500"/>
          <path d="M724.300 292C770 262 810 250 842 240C870 232 905 225 938 223C990 218.800 1040 218.800 1080 218.500"/>
        </g>
        <path d="M724 217.300H1080" stroke="#3636b8"/>
        <path d="M724.300 459.300H767L787.700 209.700H1080" fill="none" stroke="#0e8a12" stroke-width="1.700"/>
        <circle cx="937.300" cy="223" r="2.700" fill="#14e6f0" stroke="#123"/>
        ${label(966, 462.3, "95.9%", "#8a2c9c")}
        <rect x="925" y="181.500" width="25" height="10" fill="#dbe7f5" stroke="#6f7f96"/>${label(937.5, 187.5, "0.5%")}

        <rect x="728.500" y="201.500" width="136" height="93" rx="3" fill="#e9f0fa" fill-opacity=".78" stroke="#8896a8"/>
        <rect x="734.700" y="208" width="2.600" height="12" fill="#9be89b"/>${label(737.7, 213.7, "1,617.00 Realized PnL", "#555", "start")}
        ${legs.map(([q, k, v, c], i) => {
          const y = 225.3 + i * 11.75;
          const buy = q === "+3";
          const ink = buy ? "#4343ee" : "#f34c4c";
          return svg`<rect x="734.700" y=${y - 5.5} width="2.600" height="11" fill=${c}/>${label(737.7, y, q, "#555", "start")}${label(buy ? 751 : 749, y, `18oct. ${k} Put Δ`, ink, "start")}${label(buy ? 858 : 855, y, v, ink, "end")}`;
        })}
        <rect x="728.500" y="422.500" width="87" height="47" rx="3" fill="#e9f0fa" fill-opacity=".78" stroke="#8896a8"/>
        ${upright(778, 455, "5572.13", "#cfa3dc")}
        ${label(735, 435, "18/10/2024 (0)", "#5fa85f", "start")}${label(735, 446.7, "13/10/2024 (5) T+4", "#f57272", "start")}${label(735, 458.3, "09/10/2024 (9) T+0", "#74dc74", "start")}
        ${label(753.3, 462.3, "4.1%", "#8a2c9c")}

        <rect x="680.500" y="492.500" width="420" height="158" rx="4" fill="#e6f0f8" stroke="#8296a6"/>
        ${greeks.map((g) => svg`
          ${label(702, g.base + 0.7, g.name, "#7d858e")}
          ${g.ends.map((e, i) => svg`<rect x=${edges[i]} y=${Math.min(e, g.base)} width=${edges[i + 1] - edges[i]} height=${Math.abs(e - g.base)} fill=${e > g.base ? "#f47a7a" : "#5a7bfb"} stroke="#5d6470" stroke-width=".8"/>`)}
          ${g.vals.map((v, i) => {
            const neg = v[0] === "-";
            const ink = neg ? "#f06f78" : "#7378f2";
            return svg`${label(px(strikes[i]) + 1, neg ? g.neg : g.pos, v, ink)}${g.pct ? label(px(strikes[i]) + 1, neg ? 502 : 530, g.pct[i], ink) : ""}`;
          })}`)}
        <rect x="916" y="477.500" width="42" height="172" rx="3" fill="#e9f0fa" fill-opacity=".84" stroke="#7c8b9d"/>
        ${label(937.3, 483.7, "5782.10", "#3f3f3f")}
        ${[["2,029", 512], ["24.4%", 525.3], ["5.84", 552.7], ["-0.06", 580.3], ["43.23", 608], ["-67.33", 635]].map(([t, y]) => label(937.3, y as number, t as string, String(t)[0] === "-" ? "#ee2233" : "#2a2af0", "middle", true))}
      </svg>
      <div class="foot"><span>300%</span><span>-</span></div>`;
  }
}

@customElement("app-root")
class AppRoot extends LitElement {
  static styles = css`
    :host { display: block; overflow: hidden; background: #d6dbe9; }
    main { display: grid; grid-template-columns: minmax(0, 676fr) minmax(0, 404fr); }
    .left { position: relative; }
    .grip { position: absolute; right: 4px; top: 263px; display: block; }
  `;
  render() {
    return html`<app-ribbon></app-ribbon>
      <main><div class="left"><position-panel></position-panel>
        <svg class="grip" width="4" height="13" viewBox="0 0 4 13"><path d="M.500 0v13M2 1v12M3.500 0v13" stroke="#a0aac0" stroke-dasharray="1 1"/></svg></div>
        <chart-panel></chart-panel></main>`;
  }
}
